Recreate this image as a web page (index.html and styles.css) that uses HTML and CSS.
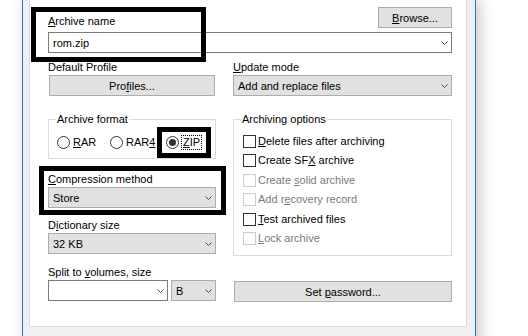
FILE: index.html
```html
<!DOCTYPE html>
<html>
<head>
<meta charset="utf-8">
<link rel="stylesheet" href="styles.css">
</head>
<body>
<div class="screen">
  <div class="window">
    <div class="panel">
      <div class="head">
        <div class="lbl"><span class="u">A</span>rchive name</div>
        <div class="btn browse"><span><span class="u">B</span>rowse...</span></div>
      </div>
      <div class="combo edit name-combo"><span>rom.zip</span><svg class="chev" width="7" height="4" viewBox="0 0 7 4"><polyline points="0.5,0.5 3.5,3.5 6.5,0.5"/></svg></div>
      <div class="cols">
        <div class="col">
          <div class="lbl">Default Profile</div>
          <div class="btn profiles"><span>Pro<span class="u">f</span>iles...</span></div>
          <fieldset class="group">
            <legend>Archive format</legend>
            <div class="radios">
              <div class="radio"><span class="circle"></span><span><span class="u">R</span>AR</span></div>
              <div class="radio"><span class="circle"></span><span>RAR<span class="u">4</span></span></div>
              <div class="radio"><span class="circle on"></span><span class="focus"><span class="u">Z</span>IP</span></div>
            </div>
          </fieldset>
          <div class="lbl gap-cm"><span class="u">C</span>ompression method</div>
          <div class="combo"><span>Store</span><svg class="chev" width="7" height="4" viewBox="0 0 7 4"><polyline points="0.5,0.5 3.5,3.5 6.5,0.5"/></svg></div>
          <div class="lbl gap-dict">D<span class="u">i</span>ctionary size</div>
          <div class="combo"><span>32 KB</span><svg class="chev" width="7" height="4" viewBox="0 0 7 4"><polyline points="0.5,0.5 3.5,3.5 6.5,0.5"/></svg></div>
          <div class="lbl gap-split">Split to <span class="u">v</span>olumes, size</div>
          <div class="split">
            <div class="combo edit vol"><span></span><svg class="chev" width="7" height="4" viewBox="0 0 7 4"><polyline points="0.5,0.5 3.5,3.5 6.5,0.5"/></svg></div>
            <div class="combo unit"><span>B</span><svg class="chev" width="7" height="4" viewBox="0 0 7 4"><polyline points="0.5,0.5 3.5,3.5 6.5,0.5"/></svg></div>
          </div>
        </div>
        <div class="col">
          <div class="lbl"><span class="u">U</span>pdate mode</div>
          <div class="combo"><span>Add and replace files</span><svg class="chev" width="7" height="4" viewBox="0 0 7 4"><polyline points="0.5,0.5 3.5,3.5 6.5,0.5"/></svg></div>
          <fieldset class="group opts-group">
            <legend>Archiving options</legend>
            <div class="opts">
              <div class="chk"><span class="box"></span><span><span class="u">D</span>elete files after archiving</span></div>
              <div class="chk"><span class="box"></span><span>Create SF<span class="u">X</span> archive</span></div>
              <div class="chk off"><span class="box"></span><span>Create <span class="u">s</span>olid archive</span></div>
              <div class="chk off"><span class="box"></span><span>Add r<span class="u">e</span>covery record</span></div>
              <div class="chk"><span class="box"></span><span><span class="u">T</span>est archived files</span></div>
              <div class="chk off"><span class="box"></span><span><span class="u">L</span>ock archive</span></div>
            </div>
          </fieldset>
          <div class="btn password"><span>Set <span class="u">p</span>assword...</span></div>
        </div>
      </div>
    </div>
    <div class="buttons">
      <div class="btn dlg default"></div>
      <div class="btn dlg"></div>
      <div class="btn dlg"></div>
    </div>
  </div>
  <div class="mark mark-name"></div>
  <div class="mark mark-zip"></div>
  <div class="mark mark-cm"></div>
</div>
</body>
</html>
```

FILE: styles.css
```css
html, body {
  margin: 0;
  background: #fff;
}
body {
  font-family: "Liberation Sans", Arial, sans-serif;
  font-size: 11px;
  color: #000;
}
.screen {
  width: 528px;
  height: 336px;
  position: relative;
  overflow: hidden;
  background: #fff;
}
.window {
  margin-left: 22px;
  width: 454px;
  height: 380px;
  box-sizing: border-box;
  background: #f0f0f0;
  border-left: 1px solid #1979ca;
  border-right: 1px solid #1979ca;
  box-shadow: 4px 0 14px rgba(0, 0, 0, 0.22);
}
.panel {
  margin: 0 8px 0 6px;
  background: #fff;
  border: 1px solid #dadada;
  border-top: 0;
  padding: 7px 14px 24px 18px;
}
.u { text-decoration: underline; }
.lbl {
  line-height: 13px;
  height: 13px;
  margin-bottom: 1px;
  white-space: nowrap;
}
.head {
  display: flex;
  justify-content: space-between;
  align-items: flex-end;
}
.head .lbl { margin-bottom: 0; }
.btn {
  box-sizing: border-box;
  height: 21px;
  background: #e1e1e1;
  border: 1px solid #adadad;
  display: flex;
  align-items: center;
  justify-content: center;
  white-space: nowrap;
}
.browse { width: 74px; }
.combo {
  box-sizing: border-box;
  height: 21px;
  background: #e1e1e1;
  border: 1px solid #adadad;
  display: flex;
  align-items: center;
  justify-content: space-between;
  padding: 0 3px 0 4px;
  white-space: nowrap;
}
.combo.edit {
  background: #fff;
  border-color: #7a7a7a;
}
.name-combo { margin-top: 4px; }
.chev {
  display: block;
  fill: none;
  stroke: #4d4d4d;
  stroke-width: 1;
  flex: none;
}
.cols {
  display: grid;
  grid-template-columns: 168px 219px;
  column-gap: 17px;
  margin-top: 8px;
}
.col {
  display: flex;
  flex-direction: column;
}
.profiles {
  margin-left: 1px;
  width: 166px;
}
.group {
  margin: 17px 0 0;
  padding: 10px 0 9px 0;
  border: 1px solid #dcdcdc;
  min-width: 0;
}
.group legend {
  margin-left: 7px;
  padding: 0 1px;
  line-height: 13px;
}
.radios {
  display: grid;
  grid-template-columns: 53px 56px auto;
  padding-left: 8px;
  height: 13px;
}
.radio {
  display: flex;
  align-items: center;
  gap: 3px;
  line-height: 13px;
}
.circle {
  box-sizing: border-box;
  width: 13px;
  height: 13px;
  border: 1px solid #333;
  border-radius: 50%;
  background: #fff;
  flex: none;
  display: flex;
  align-items: center;
  justify-content: center;
}
.circle.on::after {
  content: "";
  width: 7px;
  height: 7px;
  border-radius: 50%;
  background: #333;
}
.focus {
  outline: 1px dotted #000;
  outline-offset: 0;
  padding: 0 1px;
}
.gap-cm { margin-top: 14px; }
.gap-dict { margin-top: 11px; }
.gap-split { margin-top: 12px; }
.split {
  display: flex;
  gap: 3px;
}
.vol { width: 120px; }
.unit { width: 45px; }
.opts-group { padding: 9px 0 3px 0; }
.opts { padding-left: 9px; }
.chk {
  display: flex;
  align-items: flex-start;
  gap: 2px;
  height: 19px;
  line-height: 13px;
  white-space: nowrap;
}
.chk:nth-child(even) { height: 20px; }
.box {
  box-sizing: border-box;
  width: 13px;
  height: 13px;
  border: 1px solid #333;
  background: #fff;
  flex: none;
}
.chk.off { color: #7a7a7a; }
.chk.off .box { border-color: #cccccc; }
.password {
  margin: 25px 0 0 1px;
}
.buttons {
  display: flex;
  gap: 7px;
  margin: 9px 0 0 210px;
}
.dlg {
  width: 74px;
  height: 23px;
}
.dlg.default { border-color: #0078d7; }
.mark {
  position: absolute;
  box-sizing: border-box;
  border: 5px solid #000;
}
.mark-name { left: 31px; top: 7px; width: 175px; height: 55px; }
.mark-zip { left: 157px; top: 127px; width: 54px; height: 31px; }
.mark-cm { left: 39px; top: 166px; width: 187px; height: 49px; }
```
